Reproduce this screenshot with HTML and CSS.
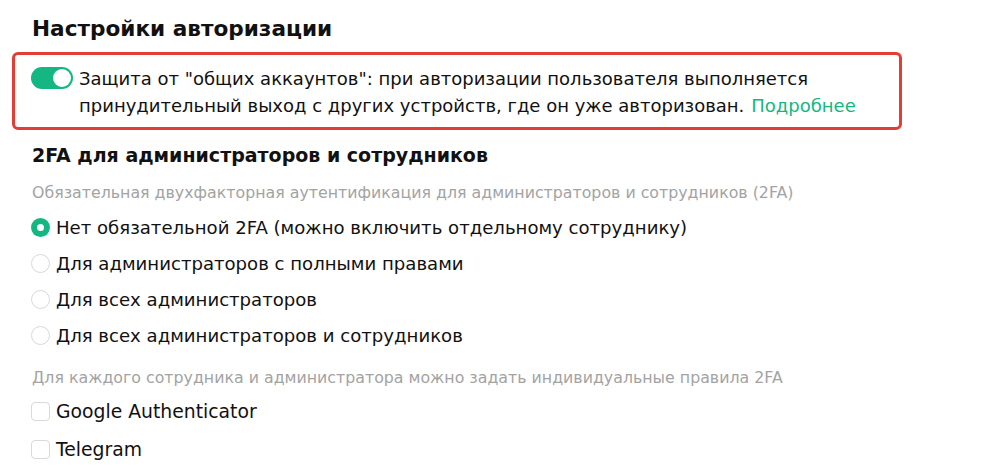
FILE: index.html
```html
<!DOCTYPE html>
<html lang="ru">
<head>
<meta charset="utf-8">
<link rel="stylesheet" href="styles.css">
</head>
<body>
<div class="page">
  <h1 class="title">Настройки авторизации</h1>
  <div class="notice">
    <span class="toggle"><span class="knob"></span></span>
    <p class="notice-text">Защита от "общих аккаунтов": при авторизации пользователя выполняется принудительный выход с других устройств, где он уже авторизован.<a class="link" href="#">Подробнее</a></p>
  </div>
  <h2 class="subtitle">2FA для администраторов и сотрудников</h2>
  <p class="hint hint-first">Обязательная двухфакторная аутентификация для администраторов и сотрудников (2FA)</p>
  <ul class="options">
    <li class="option"><span class="radio radio-on"></span>Нет обязательной 2FA (можно включить отдельному сотруднику)</li>
    <li class="option"><span class="radio"></span>Для администраторов с полными правами</li>
    <li class="option"><span class="radio"></span>Для всех администраторов</li>
    <li class="option"><span class="radio"></span>Для всех администраторов и сотрудников</li>
  </ul>
  <p class="hint hint-second">Для каждого сотрудника и администратора можно задать индивидуальные правила 2FA</p>
  <ul class="checks">
    <li class="check-row"><span class="checkbox"></span>Google Authenticator</li>
    <li class="check-row"><span class="checkbox"></span>Telegram</li>
  </ul>
</div>
</body>
</html>
```

FILE: styles.css
```css
html, body {
  margin: 0;
  padding: 0;
  background: #ffffff;
}
body {
  font-family: "DejaVu Sans", "Noto Sans", sans-serif;
  color: #111111;
}
.page {
  padding: 0 0 0 32px;
}
.title {
  margin: 14px 0 0;
  font-size: 21.6px;
  line-height: 30px;
  font-weight: 700;
}
.notice {
  margin: 8px 0 0 -20px;
  width: 890px;
  box-sizing: border-box;
  border: 3px solid #e33d35;
  border-radius: 6px;
  padding: 10px 10px 8px 16px;
  display: flex;
  align-items: flex-start;
  gap: 6px;
}
.toggle {
  flex: none;
  width: 42px;
  height: 22px;
  margin-top: 2px;
  border-radius: 11px;
  background: #14b781;
  position: relative;
}
.knob {
  position: absolute;
  right: 2px;
  top: 2px;
  width: 18px;
  height: 18px;
  border-radius: 50%;
  background: #ffffff;
}
.notice-text {
  margin: 0;
  font-size: 18px;
  line-height: 27px;
}
.link {
  color: #14b781;
  text-decoration: none;
  margin-left: 7px;
}
.subtitle {
  margin: 11px 0 0;
  font-size: 19px;
  line-height: 28px;
  font-weight: 700;
}
.hint {
  margin: 0;
  font-size: 15.8px;
  line-height: 22px;
  color: #a3a3a3;
}
.hint-first {
  margin-top: 13px;
}
.hint-second {
  margin-top: 14px;
}
.options, .checks {
  list-style: none;
  margin: 0;
  padding: 0;
}
.options {
  margin-top: 5px;
}
.checks {
  margin-top: 3px;
}
.option, .check-row {
  display: flex;
  align-items: center;
  gap: 6px;
  font-size: 18.1px;
  margin-left: -1px;
}
.option {
  height: 36px;
}
.check-row {
  height: 38px;
  font-size: 18.8px;
}
.radio {
  flex: none;
  width: 19px;
  height: 19px;
  box-sizing: border-box;
  border-radius: 50%;
  border: 1px solid #d9d9d9;
  background: #ffffff;
  display: flex;
  align-items: center;
  justify-content: center;
}
.radio-on {
  border: none;
  background: #14b781;
}
.radio-on::after {
  content: "";
  width: 7px;
  height: 7px;
  border-radius: 50%;
  background: #ffffff;
}
.checkbox {
  flex: none;
  width: 19px;
  height: 19px;
  box-sizing: border-box;
  border: 1px solid #d9d9d9;
  border-radius: 4px;
  background: #ffffff;
}
```
